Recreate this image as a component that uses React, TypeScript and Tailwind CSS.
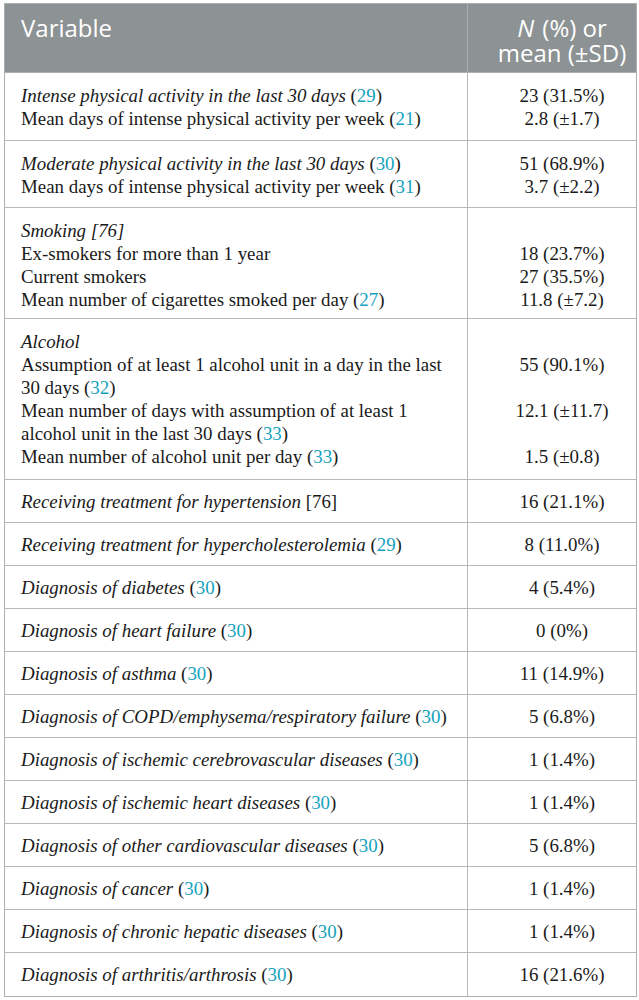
import React from "react";

const cyan = "text-[#14a2bd]";

function R({ n }: { n: string | number }) {
  return (
    <>
      (<span className={cyan}>{n}</span>)
    </>
  );
}

type Row = {
  h: string;
  left: React.ReactNode[];
  right: string[];
};

const I = ({ children }: { children: React.ReactNode }) => <i className="italic">{children}</i>;

const rows: Row[] = [
  {
    h: "h-[68px]",
    left: [
      <>
        <I>Intense physical activity in the last 30 days</I> <R n={29} />
      </>,
      <>
        Mean days of intense physical activity per week <R n={21} />
      </>,
    ],
    right: ["23 (31.5%)", "2.8 (±1.7)"],
  },
  {
    h: "h-[67px]",
    left: [
      <>
        <I>Moderate physical activity in the last 30 days</I> <R n={30} />
      </>,
      <>
        Mean days of intense physical activity per week <R n={31} />
      </>,
    ],
    right: ["51 (68.9%)", "3.7 (±2.2)"],
  },
  {
    h: "h-[111px]",
    left: [
      <I>Smoking [76]</I>,
      <>Ex-smokers for more than 1 year</>,
      <>Current smokers</>,
      <>
        Mean number of cigarettes smoked per day <R n={27} />
      </>,
    ],
    right: ["", "18 (23.7%)", "27 (35.5%)", "11.8 (±7.2)"],
  },
  {
    h: "h-[161px]",
    left: [
      <I>Alcohol</I>,
      <>Assumption of at least 1 alcohol unit in a day in the last</>,
      <>
        30 days <R n={32} />
      </>,
      <>Mean number of days with assumption of at least 1</>,
      <>
        alcohol unit in the last 30 days <R n={33} />
      </>,
      <>
        Mean number of alcohol unit per day <R n={33} />
      </>,
    ],
    right: ["", "55 (90.1%)", "", "12.1 (±11.7)", "", "1.5 (±0.8)"],
  },
];

const singles: [React.ReactNode, string][] = [
  [
    <>
      <I>Receiving treatment for hypertension</I> [76]
    </>,
    "16 (21.1%)",
  ],
  [
    <>
      <I>Receiving treatment for hypercholesterolemia</I> <R n={29} />
    </>,
    "8 (11.0%)",
  ],
  [
    <>
      <I>Diagnosis of diabetes</I> <R n={30} />
    </>,
    "4 (5.4%)",
  ],
  [
    <>
      <I>Diagnosis of heart failure</I> <R n={30} />
    </>,
    "0 (0%)",
  ],
  [
    <>
      <I>Diagnosis of asthma</I> <R n={30} />
    </>,
    "11 (14.9%)",
  ],
  [
    <>
      <I>Diagnosis of COPD/emphysema/respiratory failure</I> <R n={30} />
    </>,
    "5 (6.8%)",
  ],
  [
    <>
      <I>Diagnosis of ischemic cerebrovascular diseases</I> <R n={30} />
    </>,
    "1 (1.4%)",
  ],
  [
    <>
      <I>Diagnosis of ischemic heart diseases</I> <R n={30} />
    </>,
    "1 (1.4%)",
  ],
  [
    <>
      <I>Diagnosis of other cardiovascular diseases</I> <R n={30} />
    </>,
    "5 (6.8%)",
  ],
  [
    <>
      <I>Diagnosis of cancer</I> <R n={30} />
    </>,
    "1 (1.4%)",
  ],
  [
    <>
      <I>Diagnosis of chronic hepatic diseases</I> <R n={30} />
    </>,
    "1 (1.4%)",
  ],
  [
    <>
      <I>Diagnosis of arthritis/arthrosis</I> <R n={30} />
    </>,
    "16 (21.6%)",
  ],
];

export default function App() {
  return (
    <div className="w-[639px] h-[1000px] bg-white pt-[3px] pl-[4px]">
      <div className="w-[633px] border border-[#aab0b0] text-[#1a1a1a] text-[18.9px] leading-[23px] font-['Liberation_Serif','DejaVu_Serif',serif]">
        <div className="grid grid-cols-[462px_1fr] h-[69px] bg-[#8d9294] text-white text-[24px] leading-[25px] border-b border-[#aab0b0] font-['Open_Sans','Liberation_Sans',sans-serif]">
          <div className="pl-[16px] pt-[11px]">Variable</div>
          <div className="border-l border-[#a9adae] pl-[24px] pr-[4px] pt-[11px] text-center whitespace-nowrap">
            <div className="h-[25px]">
              <i className="italic pr-[2px]">N</i> (%) or
            </div>
            <div className="h-[25px]">mean (±SD)</div>
          </div>
        </div>
        {rows.map((r, i) => (
          <div
            key={i}
            className={`grid grid-cols-[462px_1fr] border-b border-[#b4b9b9] ${r.h}`}
          >
            <div className="pl-[16px] pt-[11px] whitespace-nowrap">
              {r.left.map((l, j) => (
                <div key={j} className="h-[23px]">
                  {l}
                </div>
              ))}
            </div>
            <div className="border-l border-[#b4b9b9] pl-[20px] pt-[11px] text-center">
              {r.right.map((v, j) => (
                <div key={j} className="h-[23px]">
                  {v}
                </div>
              ))}
            </div>
          </div>
        ))}
        {singles.map(([l, v], i) => (
          <div
            key={i}
            className={`grid grid-cols-[462px_1fr] h-[43px] ${
              i < singles.length - 1 ? "border-b border-[#b4b9b9]" : ""
            }`}
          >
            <div className="pl-[16px] pt-[10px] whitespace-nowrap">{l}</div>
            <div className="border-l border-[#b4b9b9] pl-[20px] pt-[10px] text-center">{v}</div>
          </div>
        ))}
      </div>
    </div>
  );
}
